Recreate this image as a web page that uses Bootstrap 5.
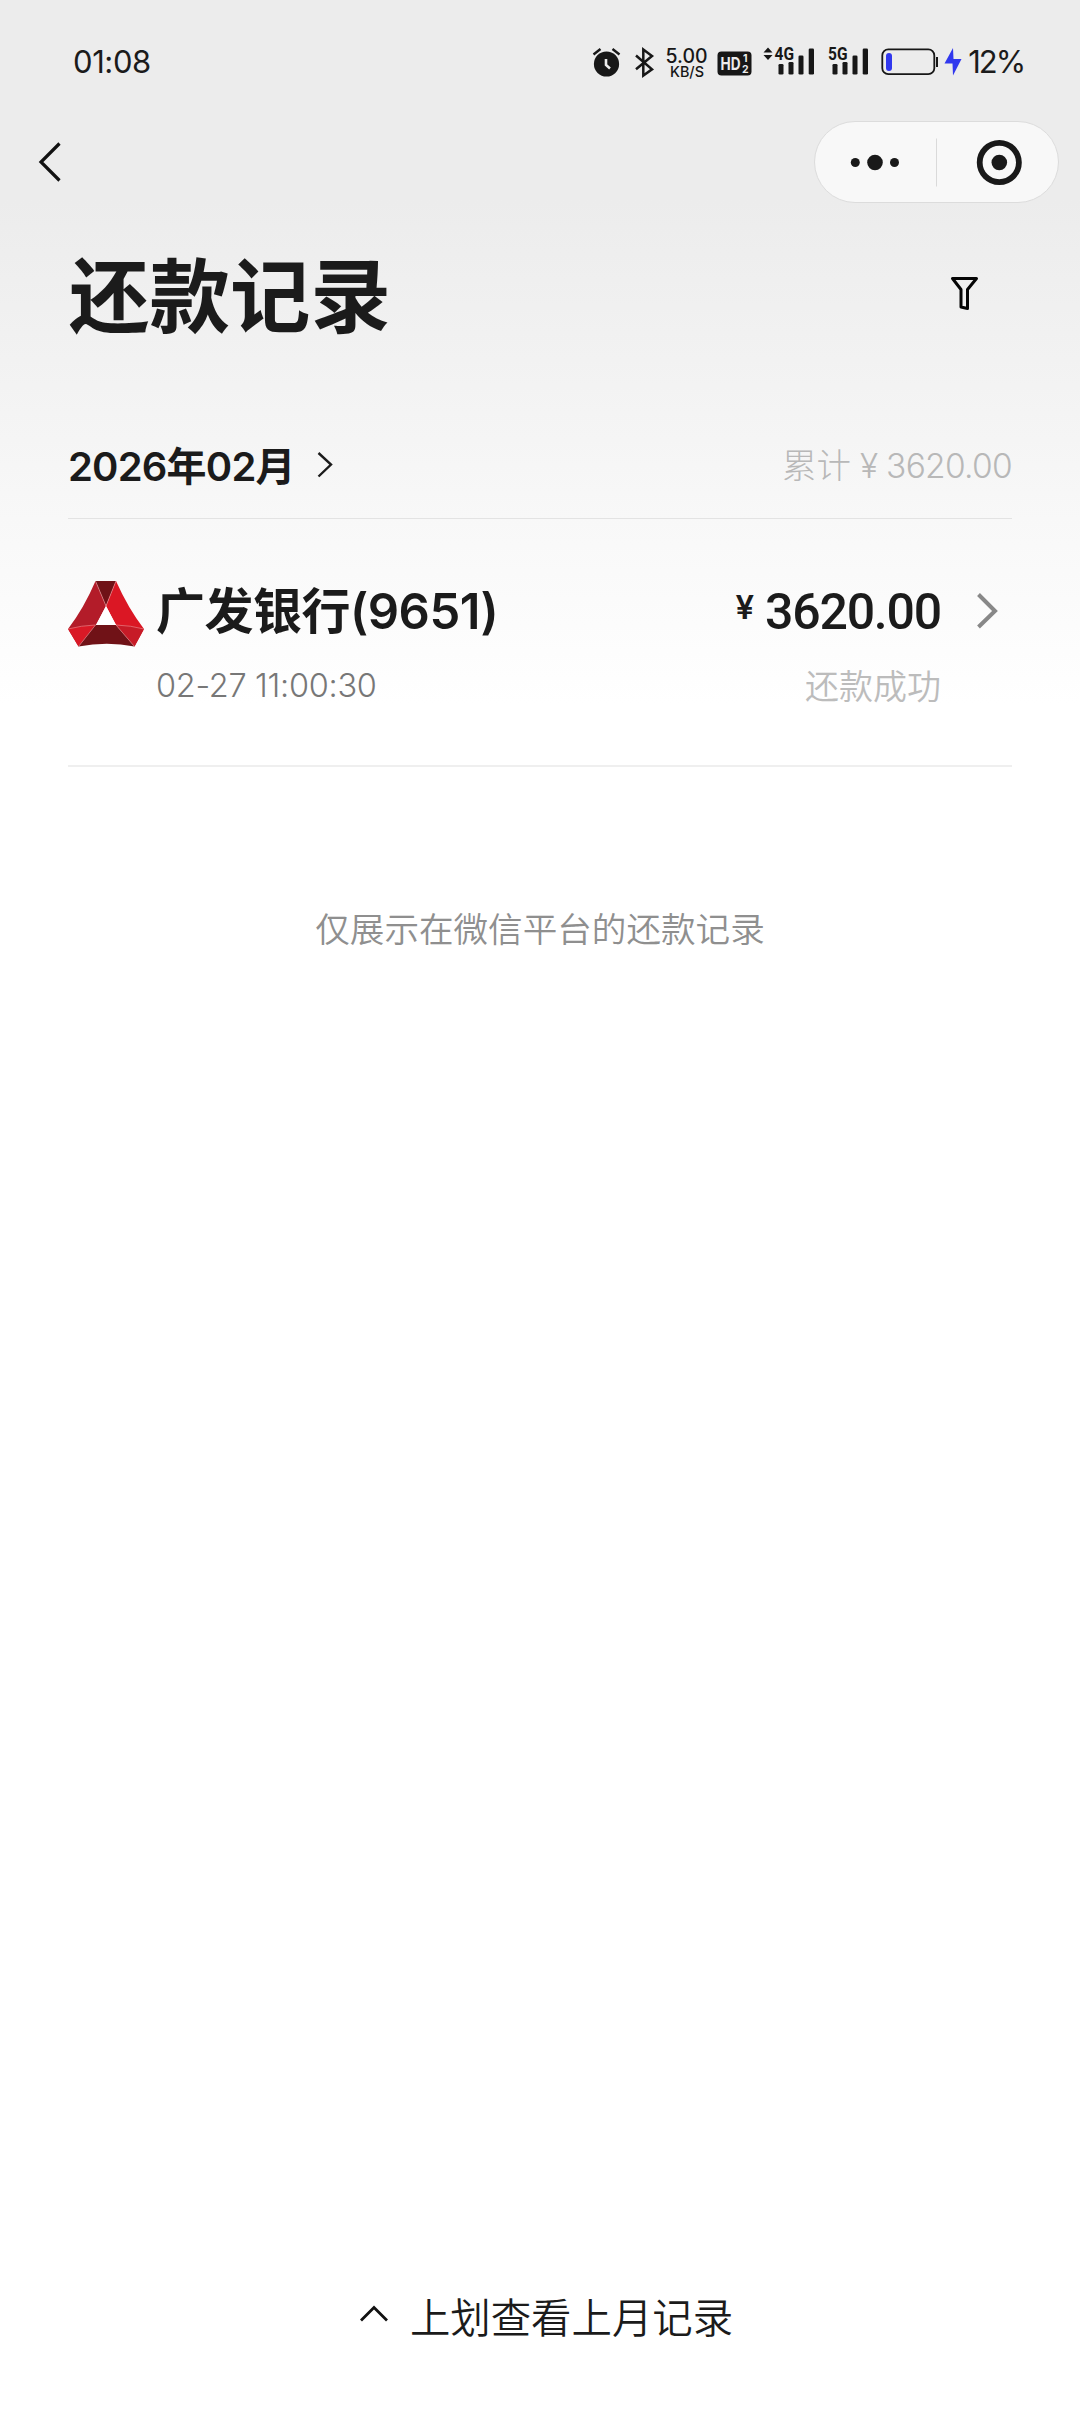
<!DOCTYPE html>
<html lang="zh-CN">
<head>
<meta charset="utf-8">
<meta name="viewport" content="width=device-width, initial-scale=1">
<title>还款记录</title>
<link href="https://cdn.jsdelivr.net/npm/bootstrap@5.3.0/dist/css/bootstrap.min.css" rel="stylesheet">
<style>
  body { color: #1b1b1b; background: #fff; font-family: Inter, "Noto Sans CJK SC", sans-serif; }
  .screen { height: 2412px; background: linear-gradient(#ececec 200px, #fff 705px); overflow: hidden; }
  svg { display: block; flex: none; }
  .cjk { font-family: "Noto Sans CJK SC", sans-serif; }
  .status-bar { height: 124px; padding: 0 56px 0 73px; }
  .clock { font-size: 31px; line-height: 40px; letter-spacing: -.4px; }
  .batt-text { font-size: 31px; line-height: 40px; letter-spacing: -2.1px; }
  .nav-row { height: 82px; margin-top: -3px; padding: 0 21px 0 38px; }
  .capsule { width: 245px; height: 82px; background: #f8f8f8; border: 1px solid #dcdcdc; border-radius: 41px; }
  .heading { height: 176px; padding: 0 99px 0 69px; }
  .heading h1 { font-size: 80.5px; line-height: 100px; font-weight: 700; padding-top: 38px; }
  .filter { margin-top: 72px; }
  .month-row { height: 140px; margin: 0 68px; padding-top: 66px; border-bottom: 1px solid #e3e3e3; }
  .month { font-size: 40px; line-height: 44px; font-weight: 600; letter-spacing: -.8px; }
  .month-arrow { margin: -2px 0 0 19px; }
  .total { font-size: 34.5px; line-height: 42px; font-weight: 300; color: #b8b8b8; }
  .total-num { font-size: 33.5px; letter-spacing: -.7px; margin-left: 9px; }
  .record { height: 248px; margin: 0 68px; border-bottom: 2px solid #efefef; }
  .logo { margin-top: 61px; }
  .record-text { padding: 63px 0 0 10px; }
  .bank { font-size: 49px; line-height: 60px; font-weight: 600; letter-spacing: -.5px; }
  .record-sum { padding-top: 63px; }
  .amount { font-family: Roboto, sans-serif; font-size: 50px; line-height: 60px; font-weight: 500; letter-spacing: -1.2px; margin-left: 11px; }
  .yen { font-size: 33px; line-height: 50px; font-weight: 600; }
  .stamp { font-size: 32.5px; line-height: 40px; font-weight: 300; letter-spacing: -.3px; color: #777; margin-top: 24px; }
  .state { font-size: 34px; line-height: 40px; font-weight: 350; color: #bcbcbc; margin-top: 23px; }
  .record-arrow { margin-top: 70px; }
  .note { font-size: 34.6px; line-height: 44px; font-weight: 350; color: #8f8f8f; padding-top: 138px; }
  .footer-bar { gap: 20px; padding: 0 0 71px 11px; }
  .more { font-size: 40.4px; line-height: 50px; font-weight: 350; color: #1b1b1b; }
</style>
<script src="https://cdn.jsdelivr.net/npm/bootstrap@5.3.0/dist/js/bootstrap.bundle.min.js"></script>
</head>
<body>
<main class="screen d-flex flex-column">
  <header class="status-bar d-flex align-items-center justify-content-between">
    <div class="clock">01:08</div>
    <div class="d-flex align-items-center">
      <svg width="30" height="40" viewBox="592 42 30 40"><circle cx="606.5" cy="64" r="12.6" fill="#171717"/><path d="M593.5 54.5l7-5.5M619.5 54.5l-7-5.5" stroke="#171717" stroke-width="2.4" fill="none"/><path d="M606 59v6l4 3.500" stroke="#ececec" stroke-width="2.6" fill="none"/></svg>
      <svg width="43" height="40" viewBox="622 42 43 40"><path d="M636 55.500L652 69.300L643.300 75.500V49.500L652 56L636 69.300" fill="none" stroke="#171717" stroke-width="2.5"/></svg>
      <svg width="46" height="40" viewBox="665 42 46 40" fill="#171717" font-family="Inter, sans-serif" font-weight="500"><text x="665.500" y="63" font-size="19.500" textLength="42" lengthAdjust="spacingAndGlyphs">5.00</text><text x="670" y="76.500" font-size="14.500" textLength="34" lengthAdjust="spacingAndGlyphs">KB/S</text></svg>
      <svg width="52" height="40" viewBox="711 42 52 40" font-family="Inter, sans-serif" font-weight="700"><rect x="717.500" y="51.500" width="34" height="24" rx="4" fill="#171717"/><text x="720.500" y="70" font-size="18" textLength="20" lengthAdjust="spacingAndGlyphs" fill="#ececec">HD</text><text x="743" y="62" font-size="10.500" fill="#ececec">1</text><text x="742" y="73" font-size="10.500" fill="#ececec">2</text></svg>
      <svg width="60" height="40" viewBox="763 42 60 40" fill="#171717"><path d="M763.500 52.500l4.500-5 4.500 5zM763.500 55l4.500 5 4.500-5z"/><text x="774.500" y="60" font-family="Roboto, sans-serif" font-size="17.500" font-weight="700" textLength="19.500" lengthAdjust="spacingAndGlyphs">4G</text><rect x="778.500" y="64" width="5" height="10.500" rx="1.300"/><rect x="788.500" y="62" width="5" height="12.500" rx="1.300"/><rect x="798.500" y="55.500" width="5" height="19" rx="1.300"/><rect x="808.700" y="48.500" width="5.300" height="26" rx="1.300"/></svg>
      <svg width="58" height="40" viewBox="823 42 58 40" fill="#171717"><text x="828" y="60" font-family="Roboto, sans-serif" font-size="17.500" font-weight="700" textLength="19.500" lengthAdjust="spacingAndGlyphs">5G</text><rect x="832.500" y="64" width="5" height="10.500" rx="1.300"/><rect x="842.500" y="62" width="5" height="12.500" rx="1.300"/><rect x="852.500" y="55.500" width="5" height="19" rx="1.300"/><rect x="862.700" y="48.500" width="5.300" height="26" rx="1.300"/></svg>
      <svg width="87" height="40" viewBox="881 42 87 40"><rect x="882.300" y="49.400" width="52" height="24.800" rx="6" fill="none" stroke="#171717" stroke-width="1.800"/><rect x="936" y="57" width="2" height="10" fill="#171717"/><rect x="886" y="53" width="6" height="18" rx="3" fill="#3138ee"/><path d="M953 48L944.500 63.500H952.500L953 75.500L961.500 59H953.500Z" fill="#3138ee"/></svg>
      <div class="batt-text">12%</div>
    </div>
  </header>

  <nav class="nav-row d-flex align-items-center justify-content-between">
    <svg width="26" height="44" viewBox="38 140 26 44"><path d="M59.500 143.500L41 162L59.500 180.500" fill="none" stroke="#111" stroke-width="3.200"/></svg>
    <div class="capsule d-flex align-items-center">
      <svg width="243" height="80" viewBox="815 122 243 80"><g fill="#191919"><circle cx="855.300" cy="162.500" r="4.500"/><circle cx="875" cy="162.500" r="7.800"/><circle cx="894.500" cy="162.500" r="4.500"/><circle cx="999.300" cy="162.500" r="7.800"/></g><circle cx="999.300" cy="162.500" r="19.600" fill="none" stroke="#191919" stroke-width="5.800"/><path d="M936.500 138.500v48" stroke="#dadada"/></svg>
    </div>
  </nav>

  <section class="heading d-flex align-items-start justify-content-between">
    <h1 class="cjk mb-0">还款记录</h1>
    <svg class="filter" width="32" height="36" viewBox="949 275 32 36"><path d="M952.500 278.500H976.500L967.500 289.500V308.500L961 307V289.500Z" fill="none" stroke="#050505" stroke-width="3" stroke-linejoin="round"/></svg>
  </section>

  <section class="month-row d-flex align-items-start justify-content-between">
    <div class="d-flex">
      <div class="month">2026年02月</div>
      <svg class="month-arrow" width="22" height="44" viewBox="315 443 22 44"><path d="M319.500 453L332 464.500L319.500 476.500" fill="none" stroke="#1b1b1b" stroke-width="2.400"/></svg>
    </div>
    <div class="total d-flex"><span>累计</span><span class="total-num">¥ 3620.00</span></div>
  </section>

  <section class="record d-flex">
    <svg class="logo" width="78" height="68" viewBox="68 580 78 68"><path d="M95.500 581Q84 608 68 629L78.500 646.500L96 625L106 606Z" fill="#b31c29"/><path d="M68 629Q81 625.500 95.500 625L78.500 646.500Z" fill="#d91926"/><path d="M95.500 581H116L106 606Z" fill="#701217"/><path d="M116 581Q128 608 144 629L134.500 646.500L116 625L106 606Z" fill="#db1724"/><path d="M116 625Q131 625.500 144 629L134.500 646.500Z" fill="#c71b27"/><path d="M95.500 625H116L134.500 646.500Q107 641 78.500 646.500Z" fill="#701217"/><path d="M106 606L96 625H116Z" fill="#fff"/><path d="M95.500 581L106 606L116 581M68 629Q81 625.500 95.500 625L78.500 646.500M144 629Q131 625.500 116 625L134.500 646.500" fill="none" stroke="#ed9296" stroke-width=".6"/></svg>
    <div class="record-text flex-grow-1 d-flex flex-column">
      <div class="bank">广发银行(9651)</div>
      <div class="stamp">02-27 11:00:30</div>
    </div>
    <div class="record-sum d-flex flex-column align-items-end">
      <div class="d-flex"><span class="yen">¥</span><span class="amount">3620.00</span></div>
      <div class="state cjk">还款成功</div>
    </div>
    <svg class="record-arrow" width="71" height="44" viewBox="941 589 71 44"><path d="M978.500 594.500L995 611L978.500 627" fill="none" stroke="#888" stroke-width="4"/></svg>
  </section>

  <p class="note cjk text-center mb-0">仅展示在微信平台的还款记录</p>

  <footer class="footer-bar mt-auto d-flex justify-content-center align-items-center">
    <svg width="32" height="24" viewBox="358 2304 32 24"><path d="M361 2320.500L374 2307.500L387 2320.500" fill="none" stroke="#111" stroke-width="2.800"/></svg>
    <span class="more cjk">上划查看上月记录</span>
  </footer>
</main>
</body>
</html>
